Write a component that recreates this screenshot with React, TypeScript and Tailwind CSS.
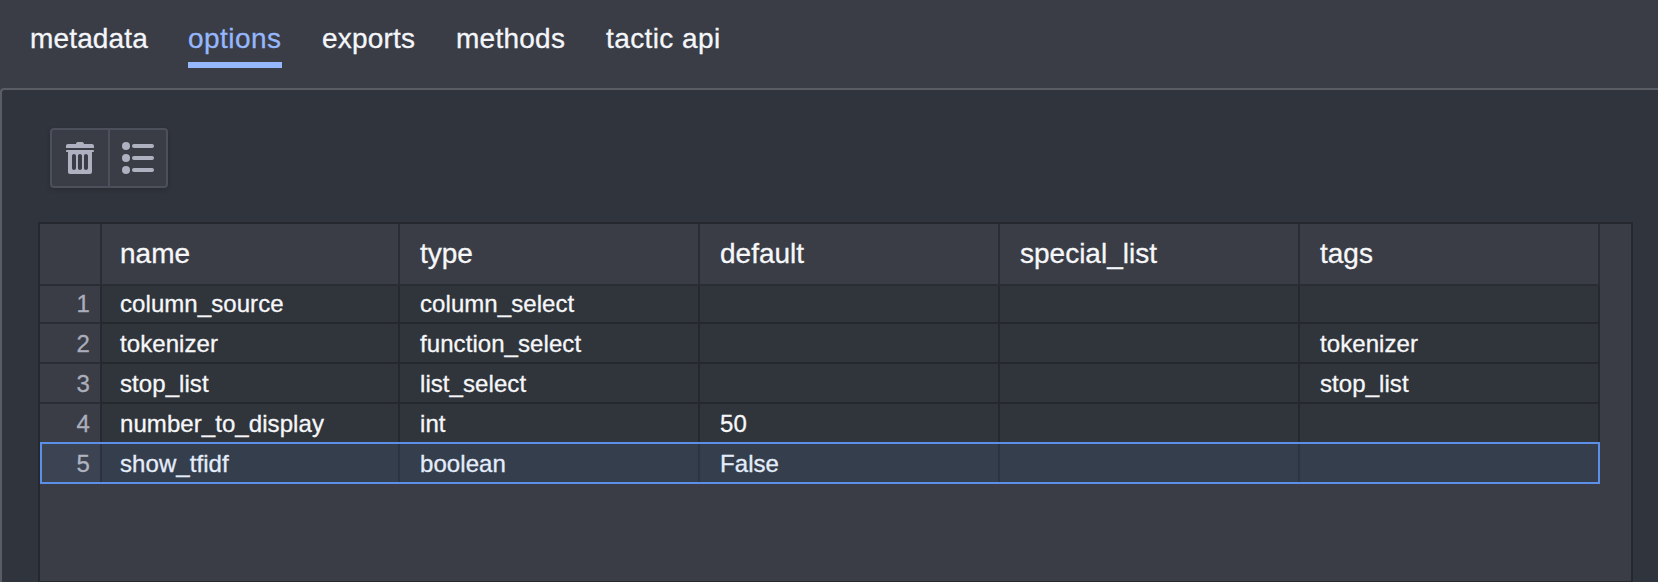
import React from "react";
import clsx from "clsx";

const tabs = [
  { label: "metadata", style: "w-[118px] tracking-[0.15px] text-[#f4f6fa]" },
  { label: "options", style: "w-[94px] tracking-[0.45px] text-[#96b7fb]", active: true },
  { label: "exports", style: "w-[94px] tracking-[0.2px] text-[#f4f6fa]" },
  { label: "methods", style: "w-[110px] tracking-[0.25px] text-[#f4f6fa]" },
  { label: "tactic api", style: "tracking-[0.4px] text-[#f4f6fa]" },
];

const columns = ["name", "type", "default", "special_list", "tags"];

const rows = [
  ["column_source", "column_select", "", "", ""],
  ["tokenizer", "function_select", "", "", "tokenizer"],
  ["stop_list", "list_select", "", "", "stop_list"],
  ["number_to_display", "int", "50", "", ""],
  ["show_tfidf", "boolean", "False", "", ""],
];

const gridCols = "grid grid-rows-1 grid-cols-[62px_298px_300px_300px_300px_300px]";

function TrashIcon() {
  return (
    <svg viewBox="0 0 16 16" className="size-8 fill-[#aeb2c0]">
      <path
        fillRule="evenodd"
        d="M14.49 3.99h-13c-.28 0-.5.22-.5.5s.22.5.5.5h.5v10c0 .55.45 1 1 1h10c.55 0 1-.45 1-1v-10h.5c.28 0 .5-.22.5-.5s-.22-.5-.5-.5zm-8.5 9c0 .55-.45 1-1 1s-1-.45-1-1v-6c0-.55.45-1 1-1s1 .45 1 1v6zm3 0c0 .55-.45 1-1 1s-1-.45-1-1v-6c0-.55.45-1 1-1s1 .45 1 1v6zm3 0c0 .55-.45 1-1 1s-1-.45-1-1v-6c0-.55.45-1 1-1s1 .45 1 1v6zm2-12h-4c0-.55-.45-1-1-1h-2c-.55 0-1 .45-1 1h-4c-.55 0-1 .45-1 1v1h14v-1c0-.55-.45-1-1-1z"
      />
    </svg>
  );
}

function ListIcon() {
  return (
    <svg viewBox="0 0 16 16" className="size-8 fill-[#aeb2c0]">
      {[2, 8, 14].map((y) => (
        <g key={y}>
          <circle cx="2" cy={y} r="2" />
          <rect x="5" y={y - 1} width="11" height="2" rx="1" />
        </g>
      ))}
    </svg>
  );
}

export default function App() {
  return (
    <div className="flex h-[582px] w-[1658px] flex-col overflow-hidden bg-[#3a3d46] font-['Liberation_Sans',Arial,sans-serif] [-webkit-text-stroke:0.3px_currentColor]">
      <nav className="flex h-[88px] shrink-0 gap-10 pl-[30px] text-[28px]">
        {tabs.map((t) => (
          <div
            key={t.label}
            className={clsx(
              "h-[68px] pt-2 leading-[62px] whitespace-nowrap",
              t.style,
              t.active && "border-b-6 border-[#96b7fb]",
            )}
          >
            {t.label}
          </div>
        ))}
      </nav>

      <main className="flex min-h-0 flex-1 flex-col rounded-tl-[4px] border-t-2 border-l-2 border-[#5a5e64] bg-[#30343c] pt-[38px]">
        <div className="ml-12 flex h-[60px] w-[118px] shrink-0 rounded-[4px] border-2 border-[#4c505a] bg-[#3a3d46] shadow-[0_2px_4px_rgba(17,20,24,0.2)]">
          <button className="flex w-[58px] items-center justify-center border-r-2 border-[#4c505a]">
            <TrashIcon />
          </button>
          <button className="flex flex-1 items-center justify-center">
            <ListIcon />
          </button>
        </div>

        <div className="mt-[34px] ml-9 w-[1595px] flex-1 border-2 border-b border-[#25282e] bg-[#3a3d46]">
          <div className={clsx(gridCols, "h-[62px] w-[1560px] text-[28px] leading-[60px] text-[#f6f7f9]")}>
            <div className="border-r-2 border-b-2 border-[#2a2d34]" />
            {columns.map((c, i) => (
              <div
                key={c}
                className={clsx("border-r-2 border-b-2 border-[#2a2d34]", i === 0 ? "pl-[18px]" : "pl-5")}
              >
                {c}
              </div>
            ))}
          </div>
          {rows.map((row, r) => {
            const selected = r === 4;
            return (
              <div
                key={row[0]}
                className={clsx(
                  gridCols,
                  "w-[1560px] text-[24px] tracking-[0.07px]",
                  r === 0 && "h-[38px] leading-[36px]",
                  r > 0 && !selected && "h-10 leading-[40px]",
                  selected && "-mt-0.5 h-[42px] leading-[44px] outline-2 -outline-offset-2 outline-[#5b8fe8]",
                )}
              >
                <div
                  className={clsx(
                    "border-r-2 pr-[10px] text-right",
                    selected
                      ? "border-[#2c323f] bg-[#3c4352] text-[#aeb4c0]"
                      : "border-b-2 border-r-[#25282e] border-b-[#2a2d34] bg-[#3a3d46] text-[#aaaebc]",
                  )}
                >
                  {r + 1}
                </div>
                {row.map((cell, i) => (
                  <div
                    key={i}
                    className={clsx(
                      "border-r-2",
                      i === 0 ? "pl-[18px]" : "pl-5",
                      selected
                        ? "border-[#2c3441] bg-[#353e4d] text-[#e4edfb]"
                        : "border-b-2 border-[#25282d] bg-[#30343b] text-[#f6f7f9]",
                    )}
                  >
                    {cell}
                  </div>
                ))}
              </div>
            );
          })}
        </div>
      </main>
    </div>
  );
}
